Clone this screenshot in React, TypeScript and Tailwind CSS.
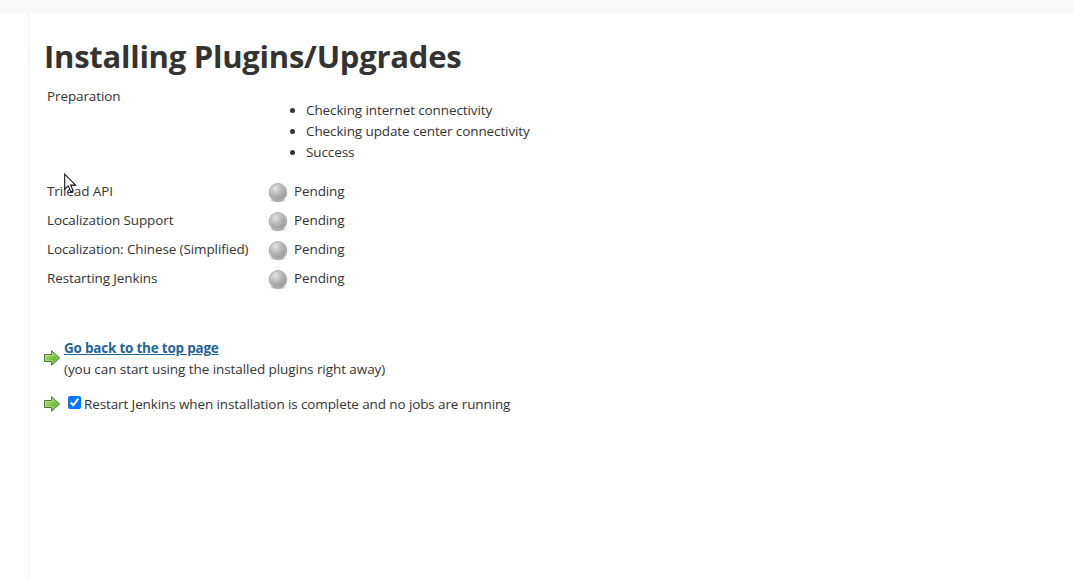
import { useState } from "react";

const STEPS = ["Checking internet connectivity", "Checking update center connectivity", "Success"];

const JOBS = [
    { name: "Trilead API", status: "Pending" },
    { name: "Localization Support", status: "Pending" },
    { name: "Localization: Chinese (Simplified)", status: "Pending" },
    { name: "Restarting Jenkins", status: "Pending" },
];

function PendingBall() {
    return (
        <svg width="20" height="22" viewBox="0 0 20 22" className="mt-px shrink-0">
            <defs>
                <radialGradient id="ball" cx="0.36" cy="0.28" r="0.75">
                    <stop offset="0" stopColor="#e4e4e4" />
                    <stop offset="0.45" stopColor="#bababa" />
                    <stop offset="1" stopColor="#929292" />
                </radialGradient>
                <radialGradient id="ballShadow">
                    <stop offset="0.5" stopColor="#000" stopOpacity="0.25" />
                    <stop offset="1" stopColor="#000" stopOpacity="0" />
                </radialGradient>
            </defs>
            <ellipse cx="10" cy="18" rx="9" ry="2.8" fill="url(#ballShadow)" />
            <circle cx="10" cy="10.4" r="8.8" fill="url(#ball)" stroke="#8e8e8e" strokeWidth="0.7" />
            <circle cx="10" cy="10.4" r="8" fill="none" stroke="#d2d2d2" strokeWidth="0.8" opacity="0.7" />
        </svg>
    );
}

function GreenArrow() {
    return (
        <svg width="16" height="16" viewBox="0 0 16 16" className="mb-[2px] shrink-0">
            <defs>
                <linearGradient id="arrow" x1="0" y1="0" x2="1" y2="1">
                    <stop offset="0" stopColor="#c0e68c" />
                    <stop offset="0.5" stopColor="#7cc24a" />
                    <stop offset="1" stopColor="#4da32a" />
                </linearGradient>
            </defs>
            <path d="M.5 4.5h7V.7L15.6 8l-8.1 7.3v-3.8h-7z" fill="url(#arrow)" stroke="#4a7d34" strokeLinejoin="round" />
            <path d="M1.5 5.5h7V3.1L13.9 8l-5.4 4.9v-2.4h-7z" fill="none" stroke="#c4e8a0" strokeWidth="0.8" opacity="0.6" />
        </svg>
    );
}

function Pointer() {
    return (
        <svg width="13" height="20" viewBox="0 0 13 20" className="absolute left-[17px] -top-[8px]">
            <path d="M.7 1.2v15l3.5-3.3 2.6 5.9 2.4-1-2.6-5.7h5z" fill="#fff" stroke="#15151f" strokeWidth="1.1" />
        </svg>
    );
}

export default function App() {
    const [restart, setRestart] = useState(true);

    return (
        <div className="flex h-screen flex-col overflow-hidden bg-white font-['Open_Sans','Noto_Sans',sans-serif] text-[13.5px] leading-[21px] tracking-[-0.11px] text-[#333]">
            <header className="h-[13px] shrink-0 bg-[#f8f8f8]" />
            <div className="flex flex-1">
                <aside className="w-[29px] shrink-0 border-r border-[#eaeff2]" />
                <main className="flex-1 pl-[15px] pt-[21px]">
                    <h1 className="text-[31px] font-bold leading-[44px] tracking-[-0.25px]">
                        <span>Installing Plugins/Upgrades</span>
                    </h1>

                    <div className="mt-2 pl-[3px]">
                        <div className="flex h-[95px]">
                            <div className="w-[221px]">
                                <span>Preparation</span>
                            </div>
                            <ul className="mt-[14px] list-disc pl-[38px]">
                                {STEPS.map((step) => (
                                    <li key={step}><span>{step}</span></li>
                                ))}
                            </ul>
                        </div>
                        {JOBS.map((job, i) => (
                            <div key={job.name} className="relative flex h-[29px]">
                                <div className="w-[221px]">
                                    <span>{job.name}</span>
                                </div>
                                <PendingBall />
                                <span className="ml-[6px]">{job.status}</span>
                                {i === 0 && <Pointer />}
                            </div>
                        ))}
                    </div>

                    <div className="mt-[41px] flex items-center gap-1">
                        <GreenArrow />
                        <div>
                            <a href="#" className="font-bold tracking-[-0.22px] text-[#1f6497] underline">Go back to the top page</a>
                            <div className="tracking-[-0.07px]">(you can start using the installed plugins right away)</div>
                        </div>
                    </div>

                    <div className="mt-[14px] flex items-center">
                        <GreenArrow />
                        <label className="flex items-center">
                            <input
                                type="checkbox"
                                checked={restart}
                                onChange={(e) => setRestart(e.target.checked)}
                                className="mb-[4px] ml-2 mr-[3px] size-[13px]"
                            />
                            <span>Restart Jenkins when installation is complete and no jobs are running</span>
                        </label>
                    </div>
                </main>
            </div>
        </div>
    );
}
